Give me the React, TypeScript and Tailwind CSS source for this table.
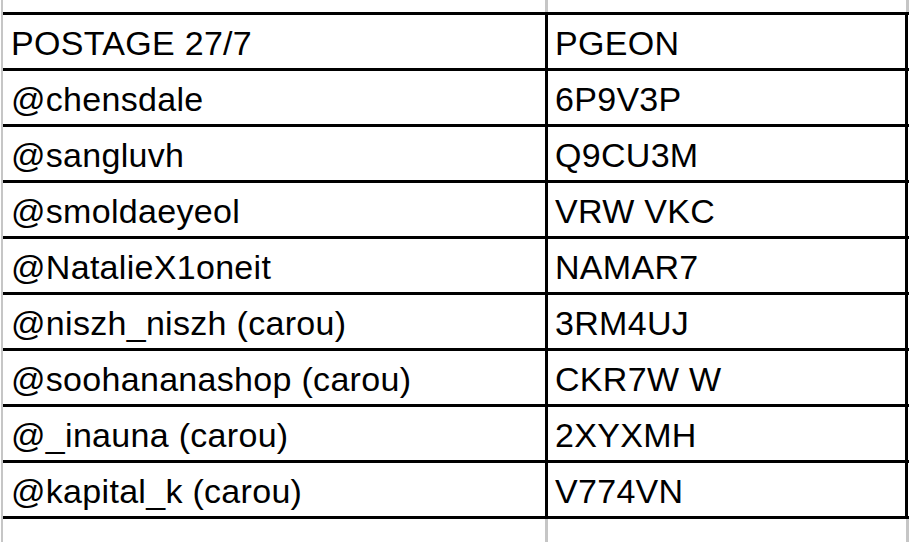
const rows = [
  ["POSTAGE 27/7", "PGEON"],
  ["@chensdale", "6P9V3P"],
  ["@sangluvh", "Q9CU3M"],
  ["@smoldaeyeol", "VRW VKC"],
  ["@NatalieX1oneit", "NAMAR7"],
  ["@niszh_niszh (carou)", "3RM4UJ"],
  ["@soohananashop (carou)", "CKR7W W"],
  ["@_inauna (carou)", "2XYXMH"],
  ["@kapital_k (carou)", "V774VN"],
];

function GridStrip({ height }: { height: string }) {
  return (
    <div className={`flex ${height}`}>
      <div className="w-[542px]" />
      <div className="w-[3px] bg-[#c6c6c6]" />
      <div className="w-[358px]" />
      <div className="w-[3px] bg-[#c6c6c6]" />
    </div>
  );
}

export default function App() {
  return (
    <div
      className="flex h-[542px] w-[909px] overflow-hidden bg-white text-black"
      style={{ fontFamily: '"Liberation Sans", Arial, sans-serif' }}
    >
      <div className="w-[1px]" />
      <div className="w-[2px] bg-[#c6c6c6]" />
      <div className="flex w-[906px] flex-col">
        <GridStrip height="h-[12px]" />
        <div className="border-t-[3px] border-black">
          {rows.map(([name, code]) => (
            <div key={name} className="flex h-[56px] border-b-[3px] border-black">
              <div className="flex w-[542px] items-end pb-[8px] pl-[8px] text-[34px] leading-none tracking-[0.3px]">
                {name}
              </div>
              <div className="flex w-[363px] items-end border-x-[3px] border-black pb-[8px] pl-[7px] text-[34px] leading-none tracking-[0.3px]">
                {code}
              </div>
            </div>
          ))}
        </div>
        <GridStrip height="flex-1" />
      </div>
    </div>
  );
}
